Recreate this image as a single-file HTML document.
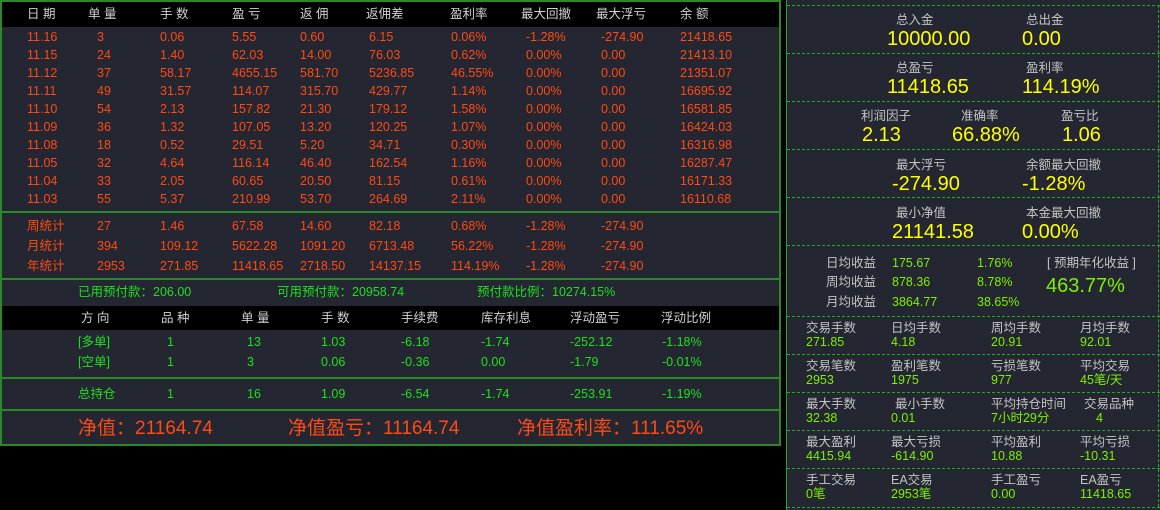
<!DOCTYPE html>
<html><head><meta charset="utf-8"><style>
*{margin:0;padding:0;box-sizing:border-box}
body{width:1160px;height:510px;background:#000;position:relative;overflow:hidden;font-family:"Liberation Sans","Noto Sans CJK SC",sans-serif;font-size:12.5px}
.p{position:absolute;background:#242631}
span{position:absolute;white-space:nowrap;line-height:16px}
.r{color:#ff4a14}.g{color:#1ee01e}.h{color:#d0d0d0}.y{color:#ffff00;font-size:20px;line-height:24px}.l{color:#c4c4c4}.c{color:#7cf000}
.hl{position:absolute;left:0;width:781px;height:2px;background:#2a8a2a}
.dl{position:absolute;left:787px;width:373px;border-top:1px dashed #22aa22}
.bk{position:absolute;left:2px;width:777px;background:#000}
</style></head><body>
<div class="p" style="left:0;top:0;width:781px;height:446px;border:2px solid #2a8a2a"></div>
<div class="bk" style="top:2px;height:25px"></div>
<div class="hl" style="top:211px"></div>
<div class="hl" style="top:278px"></div>
<div class="bk" style="top:306px;height:24px"></div>
<div class="hl" style="top:377px"></div>
<div class="hl" style="top:409px"></div>
<div class="p" style="left:786px;top:0;width:374px;height:510px;border-left:1px solid #22aa22"></div>
<div class="dl" style="top:5px"></div><div class="dl" style="top:53px"></div><div class="dl" style="top:101px"></div><div class="dl" style="top:149px"></div><div class="dl" style="top:197px"></div><div class="dl" style="top:245px"></div><div class="dl" style="top:316px"></div><div class="dl" style="top:354px"></div><div class="dl" style="top:392px"></div><div class="dl" style="top:430px"></div><div class="dl" style="top:468px"></div><div class="dl" style="top:507px"></div>
<div style="position:absolute;left:1158px;top:5px;height:502px;border-left:1px dashed #22aa22"></div>

<span class="h" style="left:27px;top:6px">日 期</span><span class="h" style="left:88px;top:6px">单 量</span><span class="h" style="left:160px;top:6px">手 数</span><span class="h" style="left:232px;top:6px">盈 亏</span><span class="h" style="left:300px;top:6px">返 佣</span><span class="h" style="left:366px;top:6px">返佣差</span><span class="h" style="left:450px;top:6px">盈利率</span><span class="h" style="left:521px;top:6px">最大回撤</span><span class="h" style="left:596px;top:6px">最大浮亏</span><span class="h" style="left:680px;top:6px">余 额</span>

<span class="r" style="left:27px;top:29px">11.16</span><span class="r" style="left:97px;top:29px">3</span><span class="r" style="left:160px;top:29px">0.06</span><span class="r" style="left:232px;top:29px">5.55</span><span class="r" style="left:300px;top:29px">0.60</span><span class="r" style="left:369px;top:29px">6.15</span><span class="r" style="left:451px;top:29px">0.06%</span><span class="r" style="left:526px;top:29px">-1.28%</span><span class="r" style="left:601px;top:29px">-274.90</span><span class="r" style="left:680px;top:29px">21418.65</span>
<span class="r" style="left:27px;top:47px">11.15</span><span class="r" style="left:97px;top:47px">24</span><span class="r" style="left:160px;top:47px">1.40</span><span class="r" style="left:232px;top:47px">62.03</span><span class="r" style="left:300px;top:47px">14.00</span><span class="r" style="left:369px;top:47px">76.03</span><span class="r" style="left:451px;top:47px">0.62%</span><span class="r" style="left:526px;top:47px">0.00%</span><span class="r" style="left:601px;top:47px">0.00</span><span class="r" style="left:680px;top:47px">21413.10</span>
<span class="r" style="left:27px;top:65px">11.12</span><span class="r" style="left:97px;top:65px">37</span><span class="r" style="left:160px;top:65px">58.17</span><span class="r" style="left:232px;top:65px">4655.15</span><span class="r" style="left:300px;top:65px">581.70</span><span class="r" style="left:369px;top:65px">5236.85</span><span class="r" style="left:451px;top:65px">46.55%</span><span class="r" style="left:526px;top:65px">0.00%</span><span class="r" style="left:601px;top:65px">0.00</span><span class="r" style="left:680px;top:65px">21351.07</span>
<span class="r" style="left:27px;top:83px">11.11</span><span class="r" style="left:97px;top:83px">49</span><span class="r" style="left:160px;top:83px">31.57</span><span class="r" style="left:232px;top:83px">114.07</span><span class="r" style="left:300px;top:83px">315.70</span><span class="r" style="left:369px;top:83px">429.77</span><span class="r" style="left:451px;top:83px">1.14%</span><span class="r" style="left:526px;top:83px">0.00%</span><span class="r" style="left:601px;top:83px">0.00</span><span class="r" style="left:680px;top:83px">16695.92</span>
<span class="r" style="left:27px;top:101px">11.10</span><span class="r" style="left:97px;top:101px">54</span><span class="r" style="left:160px;top:101px">2.13</span><span class="r" style="left:232px;top:101px">157.82</span><span class="r" style="left:300px;top:101px">21.30</span><span class="r" style="left:369px;top:101px">179.12</span><span class="r" style="left:451px;top:101px">1.58%</span><span class="r" style="left:526px;top:101px">0.00%</span><span class="r" style="left:601px;top:101px">0.00</span><span class="r" style="left:680px;top:101px">16581.85</span>
<span class="r" style="left:27px;top:119px">11.09</span><span class="r" style="left:97px;top:119px">36</span><span class="r" style="left:160px;top:119px">1.32</span><span class="r" style="left:232px;top:119px">107.05</span><span class="r" style="left:300px;top:119px">13.20</span><span class="r" style="left:369px;top:119px">120.25</span><span class="r" style="left:451px;top:119px">1.07%</span><span class="r" style="left:526px;top:119px">0.00%</span><span class="r" style="left:601px;top:119px">0.00</span><span class="r" style="left:680px;top:119px">16424.03</span>
<span class="r" style="left:27px;top:137px">11.08</span><span class="r" style="left:97px;top:137px">18</span><span class="r" style="left:160px;top:137px">0.52</span><span class="r" style="left:232px;top:137px">29.51</span><span class="r" style="left:300px;top:137px">5.20</span><span class="r" style="left:369px;top:137px">34.71</span><span class="r" style="left:451px;top:137px">0.30%</span><span class="r" style="left:526px;top:137px">0.00%</span><span class="r" style="left:601px;top:137px">0.00</span><span class="r" style="left:680px;top:137px">16316.98</span>
<span class="r" style="left:27px;top:155px">11.05</span><span class="r" style="left:97px;top:155px">32</span><span class="r" style="left:160px;top:155px">4.64</span><span class="r" style="left:232px;top:155px">116.14</span><span class="r" style="left:300px;top:155px">46.40</span><span class="r" style="left:369px;top:155px">162.54</span><span class="r" style="left:451px;top:155px">1.16%</span><span class="r" style="left:526px;top:155px">0.00%</span><span class="r" style="left:601px;top:155px">0.00</span><span class="r" style="left:680px;top:155px">16287.47</span>
<span class="r" style="left:27px;top:173px">11.04</span><span class="r" style="left:97px;top:173px">33</span><span class="r" style="left:160px;top:173px">2.05</span><span class="r" style="left:232px;top:173px">60.65</span><span class="r" style="left:300px;top:173px">20.50</span><span class="r" style="left:369px;top:173px">81.15</span><span class="r" style="left:451px;top:173px">0.61%</span><span class="r" style="left:526px;top:173px">0.00%</span><span class="r" style="left:601px;top:173px">0.00</span><span class="r" style="left:680px;top:173px">16171.33</span>
<span class="r" style="left:27px;top:191px">11.03</span><span class="r" style="left:97px;top:191px">55</span><span class="r" style="left:160px;top:191px">5.37</span><span class="r" style="left:232px;top:191px">210.99</span><span class="r" style="left:300px;top:191px">53.70</span><span class="r" style="left:369px;top:191px">264.69</span><span class="r" style="left:451px;top:191px">2.11%</span><span class="r" style="left:526px;top:191px">0.00%</span><span class="r" style="left:601px;top:191px">0.00</span><span class="r" style="left:680px;top:191px">16110.68</span>

<span class="r" style="left:27px;top:218px">周统计</span><span class="r" style="left:97px;top:218px">27</span><span class="r" style="left:160px;top:218px">1.46</span><span class="r" style="left:232px;top:218px">67.58</span><span class="r" style="left:300px;top:218px">14.60</span><span class="r" style="left:369px;top:218px">82.18</span><span class="r" style="left:451px;top:218px">0.68%</span><span class="r" style="left:526px;top:218px">-1.28%</span><span class="r" style="left:601px;top:218px">-274.90</span>
<span class="r" style="left:27px;top:238px">月统计</span><span class="r" style="left:97px;top:238px">394</span><span class="r" style="left:160px;top:238px">109.12</span><span class="r" style="left:232px;top:238px">5622.28</span><span class="r" style="left:300px;top:238px">1091.20</span><span class="r" style="left:369px;top:238px">6713.48</span><span class="r" style="left:451px;top:238px">56.22%</span><span class="r" style="left:526px;top:238px">-1.28%</span><span class="r" style="left:601px;top:238px">-274.90</span>
<span class="r" style="left:27px;top:258px">年统计</span><span class="r" style="left:97px;top:258px">2953</span><span class="r" style="left:160px;top:258px">271.85</span><span class="r" style="left:232px;top:258px">11418.65</span><span class="r" style="left:300px;top:258px">2718.50</span><span class="r" style="left:369px;top:258px">14137.15</span><span class="r" style="left:451px;top:258px">114.19%</span><span class="r" style="left:526px;top:258px">-1.28%</span><span class="r" style="left:601px;top:258px">-274.90</span>

<span class="g" style="left:78px;top:284px">已用预付款：206.00</span><span class="g" style="left:277px;top:284px">可用预付款：20958.74</span><span class="g" style="left:477px;top:284px">预付款比例：10274.15%</span>

<span class="h" style="left:81px;top:310px">方 向</span><span class="h" style="left:161px;top:310px">品 种</span><span class="h" style="left:241px;top:310px">单 量</span><span class="h" style="left:321px;top:310px">手 数</span><span class="h" style="left:401px;top:310px">手续费</span><span class="h" style="left:481px;top:310px">库存利息</span><span class="h" style="left:570px;top:310px">浮动盈亏</span><span class="h" style="left:661px;top:310px">浮动比例</span>
<span class="g" style="left:78px;top:334px">[多单]</span><span class="g" style="left:167px;top:334px">1</span><span class="g" style="left:247px;top:334px">13</span><span class="g" style="left:321px;top:334px">1.03</span><span class="g" style="left:401px;top:334px">-6.18</span><span class="g" style="left:481px;top:334px">-1.74</span><span class="g" style="left:570px;top:334px">-252.12</span><span class="g" style="left:662px;top:334px">-1.18%</span>
<span class="g" style="left:78px;top:354px">[空单]</span><span class="g" style="left:167px;top:354px">1</span><span class="g" style="left:247px;top:354px">3</span><span class="g" style="left:321px;top:354px">0.06</span><span class="g" style="left:401px;top:354px">-0.36</span><span class="g" style="left:481px;top:354px">0.00</span><span class="g" style="left:570px;top:354px">-1.79</span><span class="g" style="left:662px;top:354px">-0.01%</span>
<span class="g" style="left:78px;top:386px">总持仓</span><span class="g" style="left:167px;top:386px">1</span><span class="g" style="left:247px;top:386px">16</span><span class="g" style="left:321px;top:386px">1.09</span><span class="g" style="left:401px;top:386px">-6.54</span><span class="g" style="left:481px;top:386px">-1.74</span><span class="g" style="left:570px;top:386px">-253.91</span><span class="g" style="left:662px;top:386px">-1.19%</span>
<span class="r" style="left:78px;top:417px;font-size:19px;line-height:24px">净值：21164.74</span><span class="r" style="left:288px;top:417px;font-size:19px;line-height:24px">净值盈亏：11164.74</span><span class="r" style="left:517px;top:417px;font-size:19px;line-height:24px">净值盈利率：111.65%</span>

<span class="l" style="left:896px;top:12px">总入金</span><span class="l" style="left:1026px;top:12px">总出金</span>
<span class="y" style="left:887px;top:27px">10000.00</span><span class="y" style="left:1022px;top:27px">0.00</span>
<span class="l" style="left:896px;top:60px">总盈亏</span><span class="l" style="left:1026px;top:60px">盈利率</span>
<span class="y" style="left:887px;top:75px">11418.65</span><span class="y" style="left:1022px;top:75px">114.19%</span>
<span class="l" style="left:861px;top:108px">利润因子</span><span class="l" style="left:961px;top:108px">准确率</span><span class="l" style="left:1061px;top:108px">盈亏比</span>
<span class="y" style="left:862px;top:123px">2.13</span><span class="y" style="left:952px;top:123px">66.88%</span><span class="y" style="left:1062px;top:123px">1.06</span>
<span class="l" style="left:896px;top:157px">最大浮亏</span><span class="l" style="left:1026px;top:157px">余额最大回撤</span>
<span class="y" style="left:892px;top:172px">-274.90</span><span class="y" style="left:1022px;top:172px">-1.28%</span>
<span class="l" style="left:896px;top:205px">最小净值</span><span class="l" style="left:1026px;top:205px">本金最大回撤</span>
<span class="y" style="left:892px;top:220px">21141.58</span><span class="y" style="left:1022px;top:220px">0.00%</span>

<span class="l" style="left:826px;top:255px">日均收益</span><span class="c" style="left:892px;top:255px">175.67</span><span class="c" style="left:977px;top:255px">1.76%</span>
<span class="l" style="left:826px;top:274px">周均收益</span><span class="c" style="left:892px;top:274px">878.36</span><span class="c" style="left:977px;top:274px">8.78%</span>
<span class="l" style="left:826px;top:294px">月均收益</span><span class="c" style="left:892px;top:294px">3864.77</span><span class="c" style="left:977px;top:294px">38.65%</span>
<span class="l" style="left:1047px;top:255px">[ 预期年化收益 ]</span><span class="c" style="left:1046px;top:274px;font-size:20px;line-height:24px">463.77%</span>

<span class="l" style="left:806px;top:320px">交易手数</span><span class="l" style="left:891px;top:320px">日均手数</span><span class="l" style="left:991px;top:320px">周均手数</span><span class="l" style="left:1080px;top:320px">月均手数</span>
<span class="c" style="left:806px;top:334px">271.85</span><span class="c" style="left:891px;top:334px">4.18</span><span class="c" style="left:991px;top:334px">20.91</span><span class="c" style="left:1080px;top:334px">92.01</span>
<span class="l" style="left:806px;top:358px">交易笔数</span><span class="l" style="left:891px;top:358px">盈利笔数</span><span class="l" style="left:991px;top:358px">亏损笔数</span><span class="l" style="left:1080px;top:358px">平均交易</span>
<span class="c" style="left:806px;top:372px">2953</span><span class="c" style="left:891px;top:372px">1975</span><span class="c" style="left:991px;top:372px">977</span><span class="c" style="left:1080px;top:372px">45笔/天</span>
<span class="l" style="left:806px;top:396px">最大手数</span><span class="l" style="left:895px;top:396px">最小手数</span><span class="l" style="left:991px;top:396px">平均持仓时间</span><span class="l" style="left:1084px;top:396px">交易品种</span>
<span class="c" style="left:806px;top:410px">32.38</span><span class="c" style="left:891px;top:410px">0.01</span><span class="c" style="left:991px;top:410px">7小时29分</span><span class="c" style="left:1096px;top:410px">4</span>
<span class="l" style="left:806px;top:434px">最大盈利</span><span class="l" style="left:891px;top:434px">最大亏损</span><span class="l" style="left:991px;top:434px">平均盈利</span><span class="l" style="left:1080px;top:434px">平均亏损</span>
<span class="c" style="left:806px;top:448px">4415.94</span><span class="c" style="left:891px;top:448px">-614.90</span><span class="c" style="left:991px;top:448px">10.88</span><span class="c" style="left:1080px;top:448px">-10.31</span>
<span class="l" style="left:806px;top:472px">手工交易</span><span class="l" style="left:891px;top:472px">EA交易</span><span class="l" style="left:991px;top:472px">手工盈亏</span><span class="l" style="left:1080px;top:472px">EA盈亏</span>
<span class="c" style="left:806px;top:486px">0笔</span><span class="c" style="left:891px;top:486px">2953笔</span><span class="c" style="left:991px;top:486px">0.00</span><span class="c" style="left:1080px;top:486px">11418.65</span>
</body></html>
